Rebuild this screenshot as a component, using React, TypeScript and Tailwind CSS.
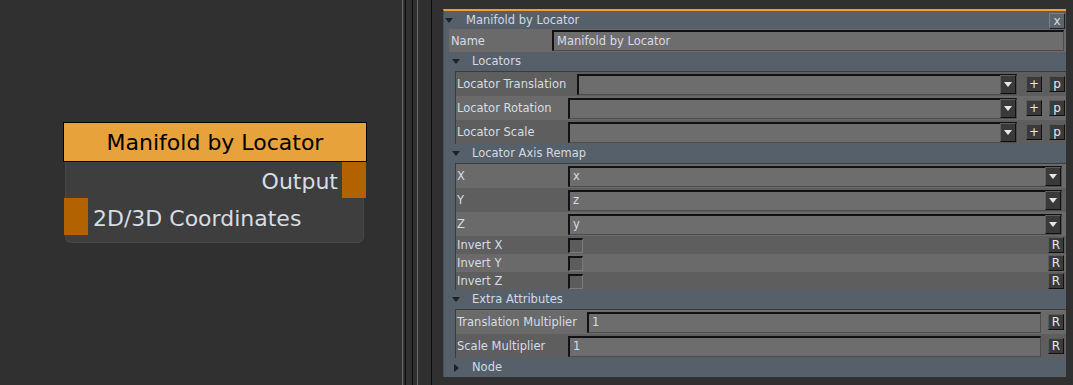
import type { ReactNode } from 'react'

const font = "font-['DejaVu_Sans','Liberation_Sans',sans-serif]"

function TriDown({ color = 'border-t-[#1e2226]' }: { color?: string }) {
  return <div className={`w-0 h-0 border-l-[4px] border-r-[4px] border-t-[5px] border-l-transparent border-r-transparent ${color}`} />
}

function TriRight() {
  return <div className="w-0 h-0 border-t-[4px] border-b-[4px] border-l-[5px] border-t-transparent border-b-transparent border-l-[#1e2226]" />
}

function SectionHeader({ title, open = true }: { title: string; open?: boolean }) {
  return (
    <div className="h-[19px] flex items-center shrink-0">
      <div className="ml-[8px] w-[8px] flex justify-center">{open ? <TriDown /> : <TriRight />}</div>
      <span className="ml-[12px] pt-[1px] text-[11.5px] text-[#d2dae2]">{title}</span>
    </div>
  )
}

function Btn({ children }: { children: ReactNode }) {
  return (
    <div className="w-[16px] h-[16px] shrink-0 bg-[#3a3a3a] border border-t-[#5a5a5a] border-l-[#5a5a5a] border-b-[#111] border-r-[#111] flex items-center justify-center text-[12px] leading-none text-[#e4e8ec]">
      {children}
    </div>
  )
}

function Field({ value = '', dropdown = false, className = '' }: { value?: string; dropdown?: boolean; className?: string }) {
  return (
    <div className={`h-[21px] bg-[#6d6d6d] border-t-2 border-l-2 border-t-[#111] border-l-[#111] border-b border-r border-b-[#4c4c4c] border-r-[#4c4c4c] flex items-center ${className}`}>
      <span className="flex-1 pl-[3px] pt-[1px] text-[11.5px] text-[#d6dde4]">{value}</span>
      {dropdown && (
        <div className="w-[16px] h-[19px] -mt-[1px] bg-[#3a3a3a] border border-t-[#5e5e5e] border-l-[#5e5e5e] border-b-[#111] border-r-[#111] flex items-center justify-center">
          <TriDown color="border-t-[#e6e6e6]" />
        </div>
      )}
    </div>
  )
}

function Check() {
  return <div className="w-[15px] h-[15px] bg-[#5c5c5c] border-t-2 border-l-2 border-t-[#111] border-l-[#111] border-b border-r border-b-[#7a7a7a] border-r-[#7a7a7a]" />
}

function Label({ text, w }: { text: string; w: string }) {
  return <div className={`${w} shrink-0 pl-[1px] pt-[2px] text-[11.5px] text-[#d6dde4] whitespace-nowrap`}>{text}</div>
}

const light = 'bg-[#6a6a6a]'
const dark = 'bg-[#5e5e5e]'

function LocatorRow({ label, w, bg }: { label: string; w: string; bg: string }) {
  return (
    <div className={`h-[24px] flex items-center ${bg}`}>
      <Label text={label} w={w} />
      <Field dropdown className="flex-1" />
      <div className="ml-[9px]"><Btn>+</Btn></div>
      <div className="ml-[7px] mr-[1px]"><Btn>p</Btn></div>
    </div>
  )
}

function RemapRow({ label, value, bg }: { label: string; value: string; bg: string }) {
  return (
    <div className={`h-[24px] flex items-center ${bg}`}>
      <Label text={label} w="w-[112px]" />
      <Field value={value} dropdown className="flex-1 mr-[4px]" />
    </div>
  )
}

function InvertRow({ label, bg }: { label: string; bg: string }) {
  return (
    <div className={`h-[18px] flex items-center ${bg}`}>
      <Label text={label} w="w-[112px]" />
      <Check />
      <div className="flex-1" />
      <div className="mr-[2px]"><Btn>R</Btn></div>
    </div>
  )
}

function MultRow({ label, w, bg }: { label: string; w: string; bg: string }) {
  return (
    <div className={`h-[24px] flex items-center ${bg}`}>
      <Label text={label} w={w} />
      <Field value="1" className="flex-1" />
      <div className="ml-[7px] mr-[2px]"><Btn>R</Btn></div>
    </div>
  )
}

function Group({ children }: { children: ReactNode }) {
  return <div className="ml-[11px] border-l border-t border-[#3a3d40] flex flex-col shrink-0">{children}</div>
}

function NodeCard() {
  return (
    <div className="absolute left-[63px] top-[122px] w-[304px]">
      <div className="h-[40px] bg-[#e8a23b] border border-black flex items-center justify-center text-[22px] text-black">
        Manifold by Locator
      </div>
      <div className="ml-[2px] w-[299px] h-[81px] bg-[#3e3e3e] border-x border-b border-[#484848] rounded-b-[6px] flex flex-col">
        <div className="h-[36px] flex items-center justify-end">
          <span className="mr-[4px] pt-[3px] text-[22px] text-[#d6dde4]">Output</span>
          <div className="w-[24px] h-[36px] -mr-[3px] bg-[#b36200]" />
        </div>
        <div className="h-[37px] flex items-center">
          <div className="w-[24px] h-[37px] -ml-[2px] bg-[#b36200]" />
          <span className="ml-[5px] pt-[3px] text-[22px] text-[#d6dde4]">2D/3D Coordinates</span>
        </div>
      </div>
    </div>
  )
}

export default function App() {
  return (
    <div className={`w-[1073px] h-[385px] bg-[#303030] flex overflow-hidden ${font}`}>
      <div className="relative w-[402px] shrink-0">
        <NodeCard />
      </div>

      <div className="w-[41px] shrink-0 flex">
        <div className="w-[1px] bg-[#6a6a6a]" />
        <div className="w-[2px]" />
        <div className="w-[1px] bg-[#0c0c0c]" />
        <div className="w-[6px]" />
        <div className="w-[1px] bg-[#0c0c0c]" />
        <div className="w-[4px]" />
        <div className="w-[1px] bg-[#6a6a6a]" />
        <div className="w-[13px]" />
        <div className="w-[1px] bg-[#0c0c0c]" />
      </div>

      <div className="w-[623px] h-[368px] mt-[9px] shrink-0 bg-[#56606a] border-t-2 border-t-[#f0a030] border-l border-l-[#474e56] flex flex-col">
        <div className="h-[18px] flex items-center shrink-0">
          <div className="ml-[1px] w-[8px] flex justify-center"><TriDown /></div>
          <span className="ml-[13px] pt-[1px] text-[11.5px] text-[#d2dae2]">Manifold by Locator</span>
          <div className="flex-1" />
          <div className="w-[16px] h-[16px] mr-[1px] mt-[2px] bg-[#5d646c] border border-t-[#7a8088] border-l-[#7a8088] border-b-[#1e1e1e] border-r-[#1e1e1e] flex items-center justify-center text-[12px] leading-none text-[#d8dde2]">
            x
          </div>
        </div>

        <div className={`h-[23px] ml-[5px] flex items-center shrink-0 ${light}`}>
          <div className="w-[103px] shrink-0 pl-[2px] pt-[2px] text-[11.5px] text-[#d6dde4]">Name</div>
          <Field value="Manifold by Locator" className="flex-1 mr-[2px]" />
        </div>

        <SectionHeader title="Locators" />
        <Group>
          <LocatorRow label="Locator Translation" w="w-[121px]" bg={dark} />
          <LocatorRow label="Locator Rotation" w="w-[112px]" bg={light} />
          <LocatorRow label="Locator Scale" w="w-[112px]" bg={dark} />
        </Group>

        <SectionHeader title="Locator Axis Remap" />
        <Group>
          <RemapRow label="X" value="x" bg={light} />
          <RemapRow label="Y" value="z" bg={dark} />
          <RemapRow label="Z" value="y" bg={light} />
          <InvertRow label="Invert X" bg={dark} />
          <InvertRow label="Invert Y" bg={light} />
          <InvertRow label="Invert Z" bg={dark} />
        </Group>

        <SectionHeader title="Extra Attributes" />
        <Group>
          <MultRow label="Translation Multiplier" w="w-[131px]" bg={light} />
          <MultRow label="Scale Multiplier" w="w-[112px]" bg={dark} />
        </Group>

        <SectionHeader title="Node" open={false} />
      </div>
    </div>
  )
}
